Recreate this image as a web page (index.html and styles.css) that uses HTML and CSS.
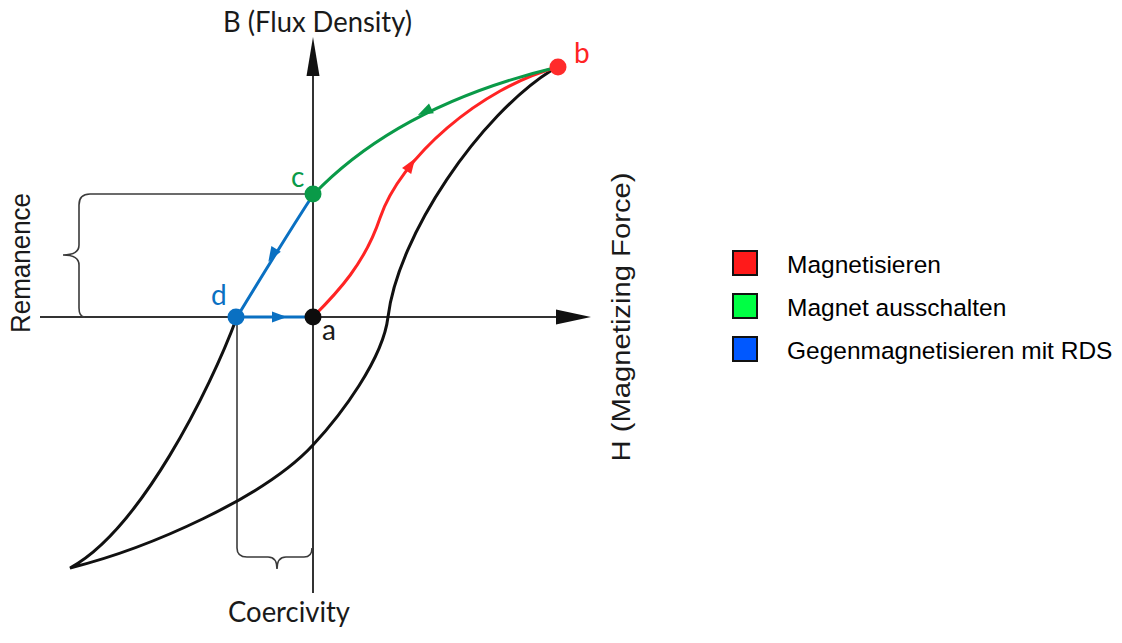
FILE: index.html
```html
<!DOCTYPE html>
<html lang="de">
<head>
<meta charset="utf-8">
<title>Hysteresekurve</title>
<link rel="stylesheet" href="styles.css">
</head>
<body>
<div class="page">
  <svg class="diagram" width="700" height="643" viewBox="0 0 700 643" xmlns="http://www.w3.org/2000/svg">
    <!-- axes -->
    <line class="axis" x1="313" y1="72" x2="313" y2="593"/>
    <polygon class="arrowhead" points="313,37 306.5,76 319.5,76"/>
    <line class="axis" x1="40" y1="317" x2="560" y2="317"/>
    <polygon class="arrowhead" points="591,317 556,309.5 556,324.5"/>

    <!-- remanence bracket -->
    <line class="guide" x1="90" y1="194" x2="313" y2="194"/>
    <path class="guide" d="M90,194 Q79,194 79,205 L79,245 Q79,255 63,255 Q79,255 79,265 L79,308 Q79,317 85,317"/>

    <!-- coercivity bracket -->
    <line class="guide" x1="237" y1="317" x2="237" y2="548"/>
    <path class="guide" d="M237,548 Q237,557 247,557 L268,557 Q277,557 277,569 Q277,557 286,557 L304,557 Q312,557 312,548"/>

    <!-- hysteresis loop -->
    <path class="loop" d="M552,70 C480,115 398,235 388,317 C383,359 341,415 313,445 C265,497 150,548 70,568 C140,530 210,390 237,317"/>

    <!-- red: magnetisieren -->
    <path class="red" d="M313,317 C338,292 365,263 380,218 C400,158 480,88 558,67"/>
    <path class="red-fill" d="M9,0 L-6,-5.5 L-6,5.5 Z" transform="translate(410,166) rotate(-56)"/>

    <!-- green: magnet ausschalten -->
    <path class="green" d="M558,67 C470,88 380,125 313,195"/>
    <path class="green-fill" d="M9,0 L-6,-5.5 L-6,5.5 Z" transform="translate(426,111) rotate(154)"/>

    <!-- blue: gegenmagnetisieren -->
    <path class="blue" d="M313,195 Q285,238 237,317 L313,317"/>
    <path class="blue-fill" d="M9,0 L-6,-5.5 L-6,5.5 Z" transform="translate(273,254) rotate(121)"/>
    <path class="blue-fill" d="M9,0 L-6,-5.5 L-6,5.5 Z" transform="translate(278,317)"/>

    <!-- points -->
    <circle class="dot-black" cx="313" cy="317" r="8.5"/>
    <circle class="dot-red" cx="558" cy="67" r="8.5"/>
    <circle class="dot-green" cx="313" cy="194" r="8.5"/>
    <circle class="dot-blue" cx="236" cy="317" r="8.5"/>

    <!-- labels -->
    <text class="lbl lbl-red" x="574" y="63">b</text>
    <text class="lbl lbl-green" x="291" y="187">c</text>
    <text class="lbl lbl-blue" x="211" y="305">d</text>
    <text class="lbl lbl-black" x="322" y="340">a</text>

    <text class="title" x="223" y="32" textLength="189" lengthAdjust="spacingAndGlyphs">B (Flux Density)</text>
    <text class="title" x="228" y="622" textLength="122" lengthAdjust="spacingAndGlyphs">Coercivity</text>
    <text class="side" transform="translate(30,263) rotate(-90)" text-anchor="middle" textLength="140" lengthAdjust="spacingAndGlyphs">Remanence</text>
    <text class="side side-h" transform="translate(630,317) rotate(-90)" text-anchor="middle" textLength="289" lengthAdjust="spacingAndGlyphs">H (Magnetizing Force)</text>
  </svg>

  <ul class="legend">
    <li class="legend-item"><span class="swatch swatch-red"></span><span class="legend-text">Magnetisieren</span></li>
    <li class="legend-item"><span class="swatch swatch-green"></span><span class="legend-text">Magnet ausschalten</span></li>
    <li class="legend-item"><span class="swatch swatch-blue"></span><span class="legend-text">Gegenmagnetisieren mit RDS</span></li>
  </ul>
</div>
</body>
</html>
```
FILE: styles.css
```css
html, body {
  margin: 0;
  padding: 0;
  background: #ffffff;
}

.page {
  display: flex;
  width: 1122px;
  height: 643px;
  overflow: hidden;
}

.diagram {
  display: block;
  flex: none;
}

.axis {
  stroke: #333333;
  stroke-width: 2;
}

.arrowhead {
  fill: #111111;
}

.guide {
  fill: none;
  stroke: #3a3a3a;
  stroke-width: 1.6;
}

.loop {
  fill: none;
  stroke: #111111;
  stroke-width: 3;
  stroke-linecap: round;
}

.red, .green, .blue {
  fill: none;
  stroke-width: 3;
  stroke-linecap: round;
}

.red { stroke: #ff2424; }
.green { stroke: #0a9a48; }
.blue { stroke: #0a70c2; }

.red-fill { fill: #ff2424; }
.green-fill { fill: #0a9a48; }
.blue-fill { fill: #0a70c2; }

.dot-black { fill: #0d0d0d; }
.dot-red { fill: #ff2b2b; }
.dot-green { fill: #0a9a48; }
.dot-blue { fill: #0a70c2; }

.lbl {
  font-family: Lato, "Open Sans", sans-serif;
  font-size: 28px;
}

.lbl-red { fill: #ff2424; }
.lbl-green { fill: #0a9a48; }
.lbl-blue { fill: #0a70c2; }
.lbl-black { fill: #1a1a1a; }

.title {
  font-family: Lato, "Open Sans", sans-serif;
  font-size: 28px;
  fill: #1a1a1a;
}

.side {
  font-family: "Liberation Sans", Arial, sans-serif;
  font-size: 27px;
  fill: #1a1a1a;
}

.side-h {
  font-size: 25px;
}

.legend {
  list-style: none;
  margin: 250px 0 0 32px;
  padding: 0;
  display: flex;
  flex-direction: column;
  gap: 17px;
}

.legend-item {
  display: flex;
  align-items: center;
  gap: 29px;
  height: 26px;
}

.swatch {
  flex: none;
  box-sizing: border-box;
  width: 26px;
  height: 26px;
  border: 2.5px solid #111111;
}

.swatch-red { background: #ff1a1a; }
.swatch-green { background: #00ff44; }
.swatch-blue { background: #0058ff; }

.legend-text {
  font-family: "Liberation Sans", Arial, sans-serif;
  font-size: 24.5px;
  line-height: 26px;
  color: #000000;
  white-space: nowrap;
  position: relative;
  top: 2px;
}
```
